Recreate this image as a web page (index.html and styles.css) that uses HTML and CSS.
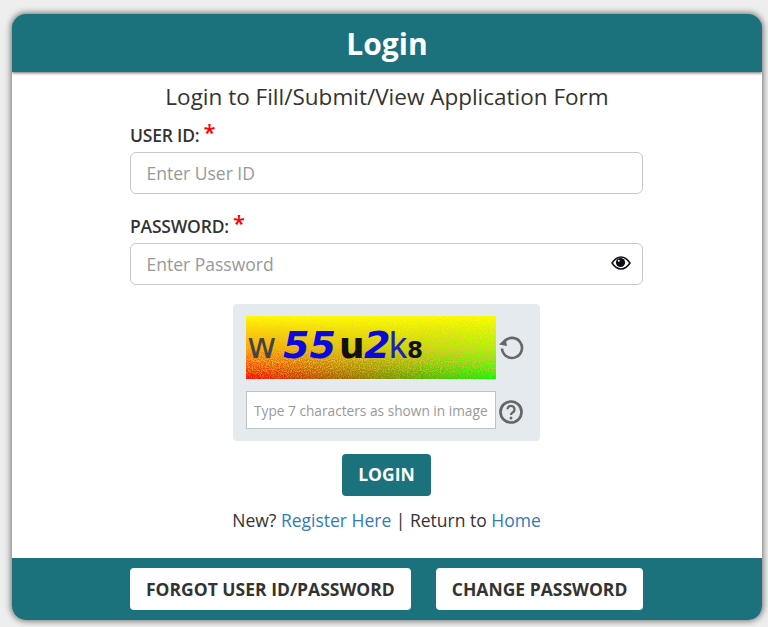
FILE: index.html
```html
<!DOCTYPE html>
<html lang="en">
<head>
<meta charset="utf-8">
<title>Login</title>
<link rel="stylesheet" href="styles.css">
</head>
<body>
<main class="card">
  <header class="card-head"><h1>Login</h1></header>
  <section class="card-body">
    <h2>Login to Fill/Submit/View Application Form</h2>
    <form class="form">
      <label class="label" for="uid">USER ID:<span class="req">*</span></label>
      <div class="field"><input id="uid" type="text" placeholder="Enter User ID"></div>
      <label class="label label-second" for="pwd">PASSWORD:<span class="req">*</span></label>
      <div class="field">
        <input id="pwd" type="password" placeholder="Enter Password">
        <svg class="eye" viewBox="0 0 20 14" width="20" height="14" aria-hidden="true">
          <path d="M1 7C4 2.600 7 1 10 1s6 1.600 9 6c-3 4.400-6 6-9 6S4 11.400 1 7z" fill="#fff" stroke="#111" stroke-width="1.500"/>
          <circle cx="9.500" cy="6.500" r="4.600" fill="#0c0c14"/>
          <circle cx="7.800" cy="4.700" r="1" fill="#fff"/>
        </svg>
      </div>
      <div class="captcha">
        <div class="captcha-row">
          <svg class="captcha-img" viewBox="0 0 250 63" width="250" height="63" role="img" aria-label="captcha">
            <defs>
              <linearGradient id="h" x1="0" x2="1" y1="0" y2="0">
                <stop offset="0" stop-color="#ff0000"/><stop offset="1" stop-color="#00ff00"/>
              </linearGradient>
              <linearGradient id="v" x1="0" x2="0" y1="0" y2="1">
                <stop offset="0" stop-color="#ffff00"/><stop offset="0.5" stop-color="#ffff00" stop-opacity="0.65"/><stop offset="1" stop-color="#ffff00" stop-opacity="0"/>
              </linearGradient>
              <filter id="noise" x="0" y="0" width="100%" height="100%">
                <feTurbulence type="fractalNoise" baseFrequency="0.9" numOctaves="2" seed="4"/>
                <feColorMatrix values="0 0 0 0 0.85  0 0 0 0 0.5  0 0 0 0 0.05  3.500 0 0 0 -1.400"/>
              </filter>
              <linearGradient id="fade" x1="0" x2="0" y1="0" y2="1">
                <stop offset="0" stop-color="#fff" stop-opacity="0.15"/><stop offset="0.7" stop-color="#fff"/><stop offset="1" stop-color="#fff" stop-opacity="0.4"/>
              </linearGradient>
              <mask id="m"><rect width="250" height="63" fill="url(#fade)"/></mask>
            </defs>
            <rect width="250" height="63" fill="url(#h)"/>
            <rect width="250" height="63" fill="url(#v)"/>
            <rect width="250" height="63" filter="url(#noise)" mask="url(#m)"/>
            <text class="c1" x="1" y="42">w</text>
            <text class="c2" x="37" y="42">55</text>
            <text class="c3" x="93" y="42">u</text>
            <text class="c2" x="118" y="42">2</text>
            <text class="c5" x="143" y="42">k</text>
            <text class="c6" x="161" y="42">8</text>
          </svg>
          <svg class="side-icon refresh" viewBox="0 0 26 26" width="26" height="26" aria-hidden="true">
            <path d="M6.300 7.500A10 10 0 1 1 4 14.500" fill="none" stroke="#666" stroke-width="2.600"/>
            <path d="M1 10.500 L7.500 4.500 L9 12z" fill="#666"/>
          </svg>
        </div>
        <div class="captcha-row captcha-row-second">
          <input class="captcha-input" type="text" placeholder="Type 7 characters as shown in image">
          <svg class="side-icon help" viewBox="0 0 26 26" width="26" height="26" aria-hidden="true">
            <circle cx="13" cy="13" r="10.500" fill="none" stroke="#666" stroke-width="2.700"/>
            <path d="M9.500 10.300a3.500 3.500 0 1 1 5.400 3c-1.300.8-1.900 1.400-1.900 2.700" fill="none" stroke="#666" stroke-width="2.300"/>
            <circle cx="13" cy="19" r="1.500" fill="#666"/>
          </svg>
        </div>
      </div>
      <button class="btn-login" type="button">LOGIN</button>
      <p class="links">New? <a href="#">Register Here</a> | Return to <a href="#">Home</a></p>
    </form>
  </section>
  <footer class="card-foot">
    <button class="btn-light" type="button">FORGOT USER ID/PASSWORD</button>
    <button class="btn-light" type="button">CHANGE PASSWORD</button>
  </footer>
</main>
</body>
</html>
```
FILE: styles.css
```css
* { box-sizing: border-box; }
html, body { height: 100%; }
body {
  margin: 0;
  background: #eeeeee;
  font-family: "Open Sans", "Liberation Sans", sans-serif;
  color: #333;
  padding: 14px 6px 7px 12px;
  overflow: hidden;
}
.card {
  width: 750px;
  height: 606px;
  background: #fff;
  border-radius: 14px;
  box-shadow: 0 0 6px 1px rgba(0,0,0,.55);
  display: flex;
  flex-direction: column;
  overflow: hidden;
}
.card-head {
  height: 58px;
  flex: none;
  background: #1b717c;
  box-shadow: 0 1px 3px rgba(0,0,0,.6);
  display: flex;
  align-items: center;
  justify-content: center;
  padding-top: 2px;
  position: relative;
}
.card-head h1 {
  margin: 0;
  color: #fff;
  font-size: 30px;
  font-weight: 700;
  line-height: 1;
}
.card-body {
  flex: 1;
  display: flex;
  flex-direction: column;
  align-items: center;
}
.card-body h2 {
  margin: 10px 0 0;
  font-size: 22.500px;
  font-weight: 400;
  line-height: 30px;
  color: #333;
}
.form {
  width: 513px;
  align-self: flex-start;
  margin-left: 118px;
  display: flex;
  flex-direction: column;
}
.label {
  display: block;
  height: 34px;
  margin-top: 6px;
  line-height: 29px;
  font-size: 17.500px;
  font-weight: 600;
  letter-spacing: -0.2px;
  color: #333;
  padding-top: 3px;
}
.label-second { margin-top: 15px; }
.req {
  color: #f00;
  font-size: 22px;
  font-weight: 600;
  margin-left: 4px;
  position: relative;
  top: -2px;
  line-height: 1;
}
.field { position: relative; height: 42px; }
.field input {
  width: 100%;
  height: 42px;
  border: 1px solid #c8c8c8;
  border-radius: 6px;
  padding: 0 16px 0 15.500px;
  font: 400 17.500px "Open Sans", sans-serif;
  color: #333;
  background: #fff;
}
input::placeholder { color: #999; opacity: 1; }
.eye { position: absolute; right: 12px; top: 13px; }
.captcha {
  align-self: center;
  width: 307px;
  height: 137px;
  margin-top: 19px;
  background: #e4eaee;
  border-radius: 4px;
  padding: 12px 13px;
  display: flex;
  flex-direction: column;
}
.captcha-row { display: flex; align-items: center; height: 63px; gap: 2px; }
.captcha-row-second { height: 38px; margin-top: 12px; }
.captcha-img { display: block; flex: none; }
.side-icon { flex: none; }
.refresh { margin-bottom: 2px; }
.help { margin-top: 4px; }
.captcha-input {
  flex: none;
  width: 250px;
  height: 38px;
  border: 1px solid #bcc4c9;
  background: #fff;
  padding: 1px 0 0 7px;
  font: 400 13.700px "Open Sans", sans-serif;
}
.c1 { font: 400 36px "DejaVu Sans", sans-serif; fill: #444; }
.c2 { font: italic 700 38px "DejaVu Sans", sans-serif; fill: #0a0ae0; }
.c3 { font: 700 36px "DejaVu Sans", sans-serif; fill: #111; }
.c5 { font: 400 36px "Liberation Sans", sans-serif; fill: #2020c0; }
.c6 { font: 700 23px "DejaVu Sans", sans-serif; fill: #111; }
.btn-login {
  align-self: center;
  width: 89px;
  height: 42px;
  margin-top: 13px;
  padding: 0 0 2px;
  border: 0;
  border-radius: 4px;
  background: #1b717c;
  color: #fff;
  font: 700 17.500px "Open Sans", sans-serif;
}
.links {
  margin: 11px 0 0;
  text-align: center;
  font-size: 17.500px;
  line-height: 27px;
  color: #333;
}
.links a { color: #337ab7; text-decoration: none; }
.card-foot {
  height: 62px;
  flex: none;
  background: #1b717c;
  display: flex;
  justify-content: flex-start;
  align-items: center;
  gap: 25px;
  padding-left: 118px;
}
.btn-light {
  height: 42px;
  padding: 0 16px;
  border: 0;
  border-radius: 4px;
  background: #fff;
  color: #333;
  font: 700 17.500px "Open Sans", sans-serif;
  white-space: nowrap;
}
```
